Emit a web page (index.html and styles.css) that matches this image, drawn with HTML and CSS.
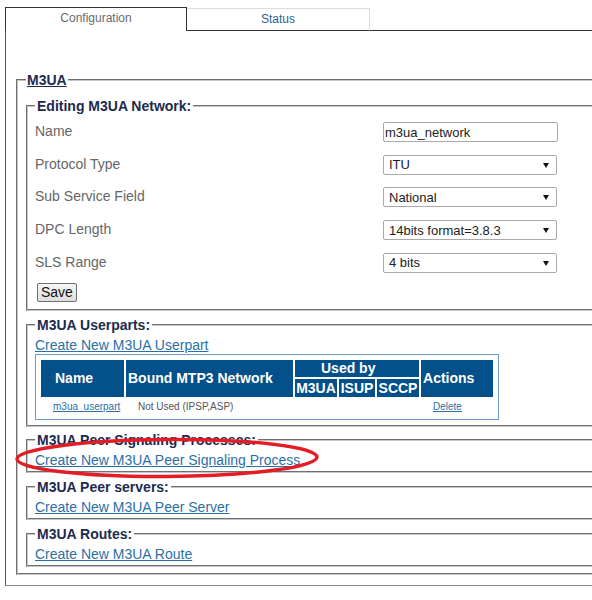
FILE: index.html
```html
<!DOCTYPE html>
<html>
<head>
<meta charset="utf-8">
<title>M3UA Configuration</title>
<link rel="stylesheet" href="styles.css">
</head>
<body>
<div class="page">
  <div class="tabs">
    <div class="tab tab-active">Configuration</div>
    <div class="tab tab-other">Status</div>
    <div class="tab-fill"></div>
  </div>
  <div class="panel">
    <fieldset class="fs fs-main">
      <legend class="lg lg-main"><a class="main-link" href="#">M3UA</a></legend>

      <fieldset class="fs fs-sub fs-edit">
        <legend class="lg">Editing M3UA Network:</legend>
        <div class="form">
          <label class="lbl">Name</label>
          <input class="ctl txt" type="text" value="m3ua_network">
          <label class="lbl">Protocol Type</label>
          <div class="sel-wrap"><select class="ctl sel"><option>ITU</option></select></div>
          <label class="lbl">Sub Service Field</label>
          <div class="sel-wrap"><select class="ctl sel"><option>National</option></select></div>
          <label class="lbl">DPC Length</label>
          <div class="sel-wrap"><select class="ctl sel"><option>14bits format=3.8.3</option></select></div>
          <label class="lbl">SLS Range</label>
          <div class="sel-wrap"><select class="ctl sel"><option>4 bits</option></select></div>
        </div>
        <button class="btn" type="button">Save</button>
      </fieldset>

      <fieldset class="fs fs-sub fs-userparts">
        <legend class="lg">M3UA Userparts:</legend>
        <a class="lnk" href="#">Create New M3UA Userpart</a>
        <table class="grid">
          <colgroup>
            <col class="c-name"><col class="c-bound"><col class="c-m3ua"><col class="c-isup"><col class="c-sccp"><col class="c-act">
          </colgroup>
          <thead>
            <tr class="r1">
              <th rowspan="2" class="th-name">Name</th>
              <th rowspan="2" class="th-left">Bound MTP3 Network</th>
              <th colspan="3" class="th-used">Used by</th>
              <th rowspan="2" class="th-left">Actions</th>
            </tr>
            <tr class="r2">
              <th class="th-c">M3UA</th>
              <th class="th-c">ISUP</th>
              <th class="th-c">SCCP</th>
            </tr>
          </thead>
          <tbody>
            <tr class="r3">
              <td><a class="small-lnk" href="#">m3ua_userpart</a></td>
              <td class="muted">Not Used (IPSP,ASP)</td>
              <td></td>
              <td></td>
              <td></td>
              <td><a class="small-lnk" href="#">Delete</a></td>
            </tr>
          </tbody>
        </table>
      </fieldset>

      <fieldset class="fs fs-sub fs-peer">
        <legend class="lg">M3UA Peer Signaling Processes:</legend>
        <a class="lnk" href="#">Create New M3UA Peer Signaling Process</a>
      </fieldset>

      <fieldset class="fs fs-sub fs-servers">
        <legend class="lg">M3UA Peer servers:</legend>
        <a class="lnk" href="#">Create New M3UA Peer Server</a>
      </fieldset>

      <fieldset class="fs fs-sub fs-routes">
        <legend class="lg">M3UA Routes:</legend>
        <a class="lnk" href="#">Create New M3UA Route</a>
      </fieldset>
    </fieldset>
  </div>

  <svg class="mark" width="340" height="50" viewBox="0 0 340 50">
    <ellipse cx="156" cy="24" rx="150" ry="18.5" transform="rotate(-0.4 156 24)" fill="none" stroke="#e31d25" stroke-width="3.5"/>
  </svg>
</div>
</body>
</html>
```

FILE: styles.css
```css
html, body {
  margin: 0;
  padding: 0;
  background: #ffffff;
  overflow: hidden;
}

body {
  font-family: "Liberation Sans", Arial, sans-serif;
  font-size: 14px;
  color: #222;
}

.page {
  position: relative;
  width: 760px;
  padding: 7px 0 0 5px;
}

/* ---------- tabs ---------- */
.tabs {
  display: flex;
  align-items: flex-end;
  height: 24px;
}

.tab {
  box-sizing: border-box;
  text-align: center;
  font-size: 12px;
  line-height: 21px;
}

.tab-active {
  width: 182px;
  height: 24px;
  border: 1px solid #333;
  border-bottom: none;
  color: #6b6b6b;
  background: #fff;
}

.tab-other {
  width: 183px;
  height: 23px;
  border-top: 1px solid #dcdcdc;
  border-right: 1px solid #dcdcdc;
  border-bottom: 1px solid #333;
  color: #2d5f8f;
}

.tab-fill {
  flex: 1;
  height: 1px;
  background: #333;
}

/* ---------- panel ---------- */
.panel {
  border-left: 1px solid #555;
  border-bottom: 1px solid #888;
  padding: 41px 0 10px 10px;
}

/* ---------- fieldsets ---------- */
.fs {
  margin: 0;
  min-width: 0;
  border: 2px groove #c4c4c4;
}

.fs-main {
  padding: 10px 0 6px 8px;
}

.fs-sub {
  padding: 3px 0 2px 7px;
  margin-top: 5px;
}

.fs-edit {
  margin-top: 0;
  padding-top: 2px;
  padding-bottom: 7px;
}

.fs-userparts {
  margin-top: 6px;
  padding-bottom: 5px;
}

.fs-peer {
  margin-top: 5px;
}

.fs-servers,
.fs-routes {
  margin-top: 6px;
}

.lg {
  padding: 0 2px;
  font-size: 14px;
  font-weight: bold;
  line-height: 16px;
  color: #1d2b4f;
}

.lg-main {
  padding: 0 1px;
}

.main-link {
  color: #1d2b4f;
  text-decoration: underline;
}

/* ---------- form ---------- */
.form {
  display: grid;
  grid-template-columns: 348px 174px;
  grid-auto-rows: 32.6px;
  align-items: center;
}

.lbl {
  color: #666;
  font-size: 14px;
  padding-bottom: 2px;
}

.ctl {
  box-sizing: border-box;
  width: 174px;
  height: 20px;
  margin: 0;
  font-family: "Liberation Sans", Arial, sans-serif;
  font-size: 13px;
  color: #222;
  background: #fff;
  border: 1px solid #a9a9a9;
  border-radius: 2px;
}

.txt {
  padding: 0 1px;
  width: 175px;
}

.sel-wrap {
  position: relative;
  width: 174px;
  height: 20px;
}

.sel {
  -webkit-appearance: none;
  appearance: none;
  padding: 0 0 0 5px;
  outline: none;
}

.sel-wrap::after {
  content: "";
  position: absolute;
  right: 8px;
  top: 8px;
  border-left: 3px solid transparent;
  border-right: 3px solid transparent;
  border-top: 5px solid #111;
  pointer-events: none;
}

.btn {
  display: block;
  margin: 4px 0 0 2px;
  height: 19px;
  padding: 0 3px;
  font-family: "Liberation Sans", Arial, sans-serif;
  font-size: 14px;
  line-height: 17px;
  color: #111;
  background: linear-gradient(#f6f6f6, #dedede);
  border: 1px solid #707070;
  border-radius: 2px;
}

/* ---------- links ---------- */
.lnk {
  display: block;
  line-height: 18px;
  font-size: 14px;
  color: #2b6fa6;
  text-decoration: underline;
}

.small-lnk {
  font-size: 10px;
  color: #2b6fa6;
  text-decoration: underline;
}

/* ---------- table ---------- */
.grid {
  table-layout: fixed;
  border: 1px solid #6b9bc9;
  border-spacing: 2px;
  padding: 3px;
  width: 464px;
}

.c-name { width: 83px; }
.c-bound { width: 167px; }
.c-m3ua { width: 42px; }
.c-isup { width: 36px; }
.c-sccp { width: 42px; }
.c-act { width: 72px; }

.grid th {
  background: #04508a;
  color: #fff;
  font-size: 14px;
  font-weight: bold;
  line-height: 16px;
  padding: 0;
  white-space: nowrap;
  overflow: hidden;
}

.r1 th { height: 17px; }
.r2 th { height: 18px; }

.th-name {
  text-align: left;
  padding-left: 14px !important;
}

.th-left {
  text-align: left;
  padding-left: 2px !important;
}

.th-used {
  text-align: left;
  padding-left: 26px !important;
}

.th-c {
  text-align: center;
}

.grid td {
  height: 14px;
  padding: 1px 0 0 12px;
  font-size: 10px;
  line-height: 12px;
  white-space: nowrap;
}

.muted {
  color: #555;
}

/* ---------- annotation overlay ---------- */
.mark {
  position: absolute;
  left: 11px;
  top: 434px;
  pointer-events: none;
}
```
